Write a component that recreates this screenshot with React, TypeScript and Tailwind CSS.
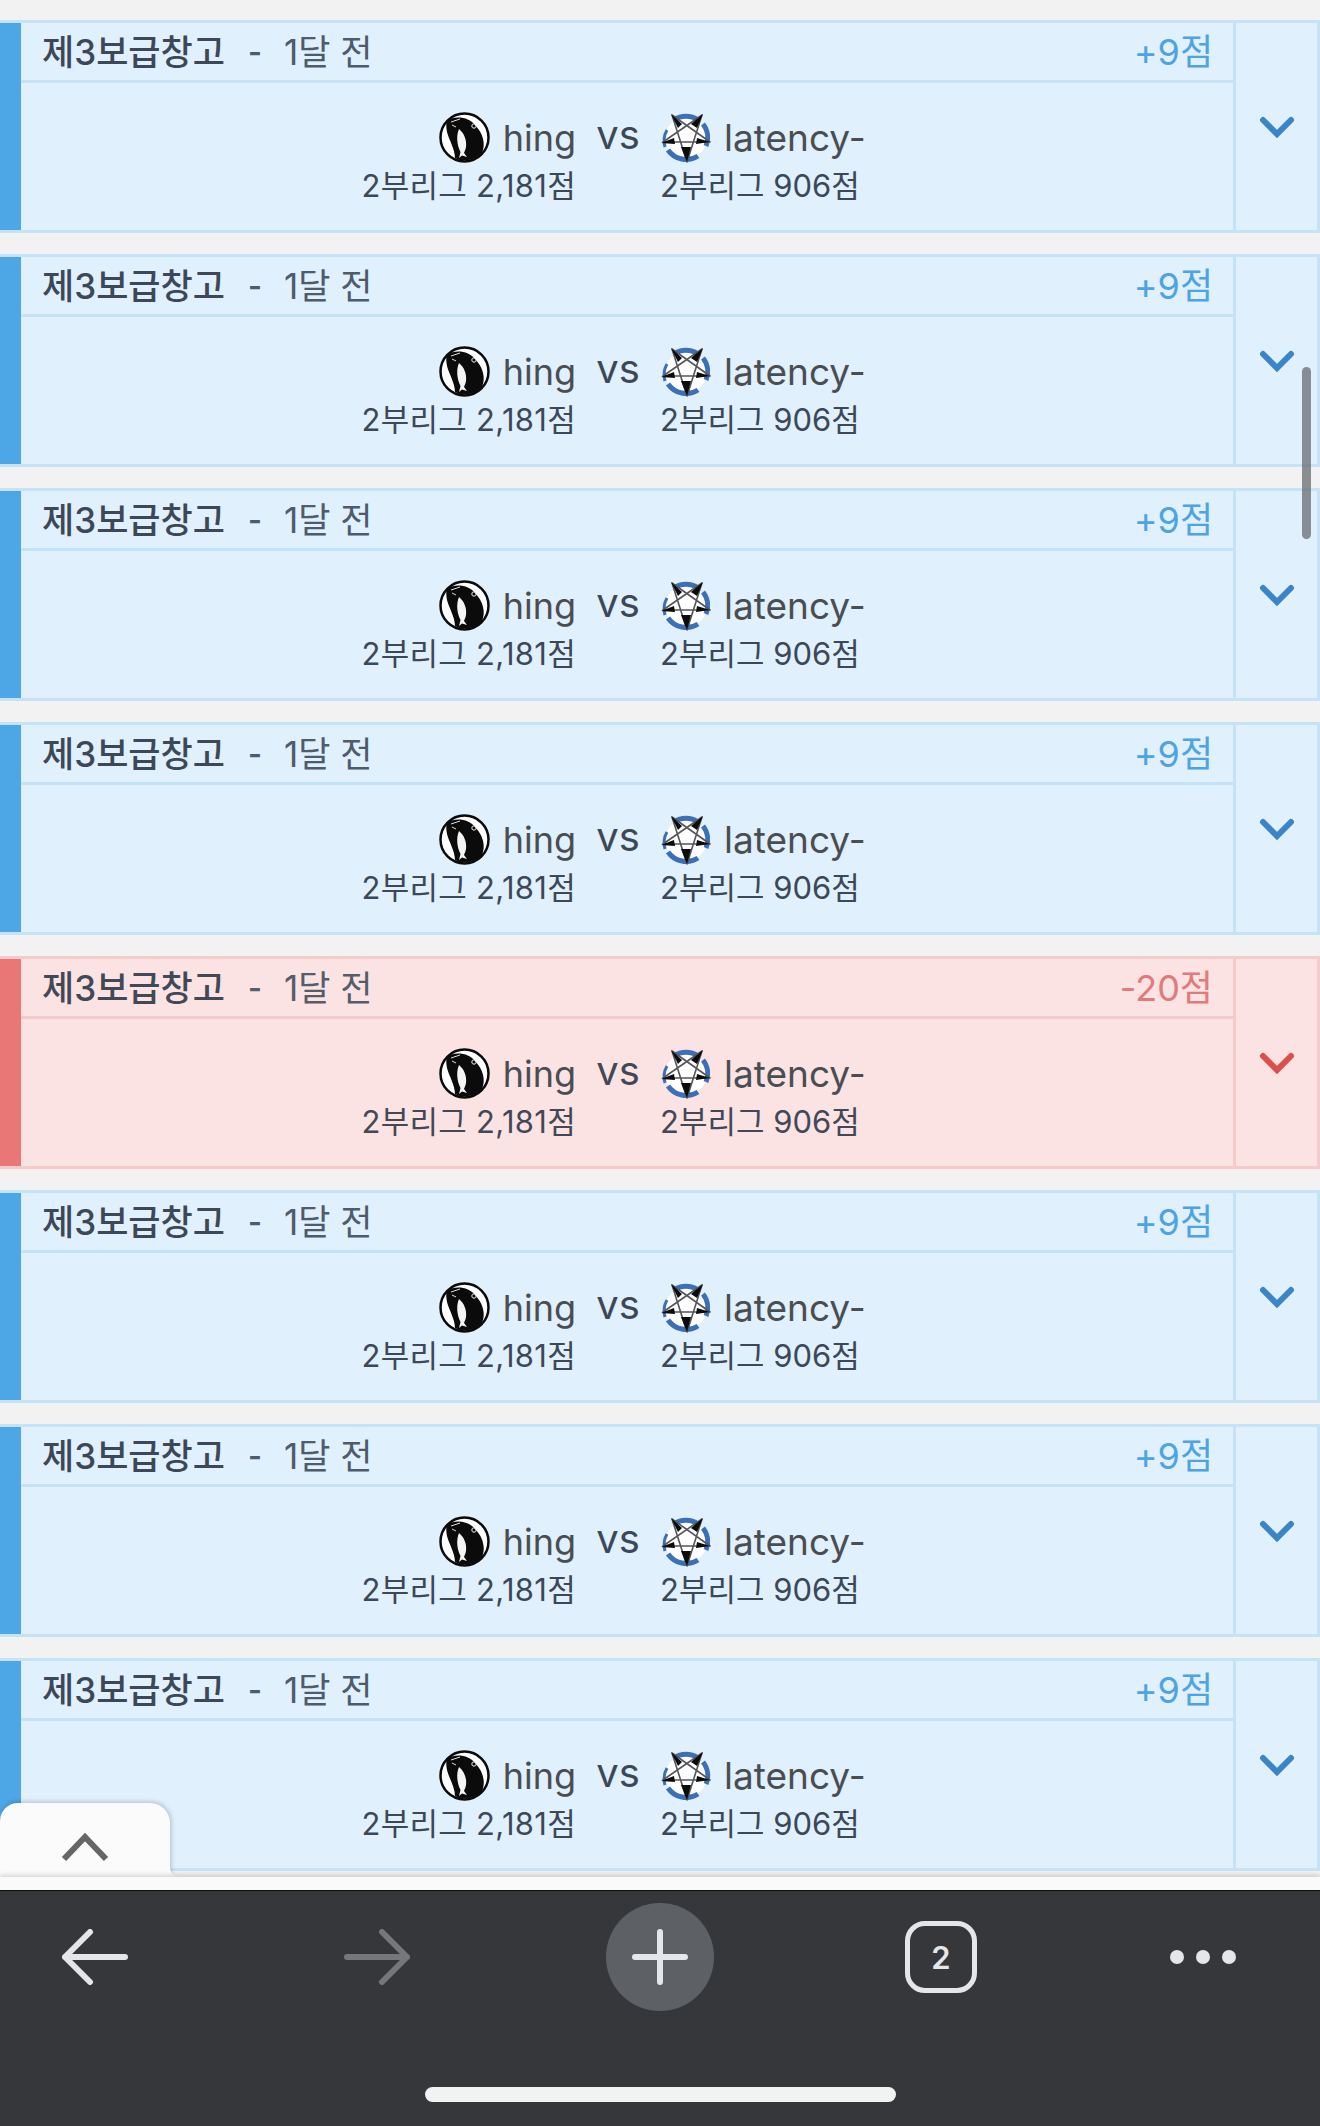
const FONT = "font-['Inter','Noto_Sans_CJK_KR',sans-serif]";

function FishAvatar() {
  return (
    <svg width="51" height="51" viewBox="0 0 51 51" className="shrink-0">
      <circle cx="25.5" cy="25.5" r="24" fill="#fff" stroke="#0a0a0a" strokeWidth="2.5" />
      <path d="M8 9 C16 3 30 5 36 13 C44 21 47 32 43 41 C37 48 24 51 16 46 C16 37 10 28 8 20 C7 15 7 12 8 9 Z" fill="#0b0b0b" />
      <path d="M20 17 C25 21 28 28 27 35 C26.5 38 25.5 39 25 41 L28 45 L23 43.5 L20 46 L21.5 40 C18 33 17 24 20 17 Z" fill="#f4f4f4" />
      <circle cx="35" cy="14" r="2.2" fill="none" stroke="#eee" strokeWidth="1" />
      <path d="M12 10 L21 7 M13 13 L17 15" stroke="#ddd" strokeWidth="1" />
    </svg>
  );
}

function StarAvatar() {
  return (
    <svg width="51" height="51" viewBox="0 0 51 51" className="shrink-0">
      <circle cx="26" cy="26" r="21" fill="#fff" />
      <path d="M14 8 A21 21 0 0 1 38 8" fill="none" stroke="#3b6fb8" strokeWidth="5" />
      <path d="M43 12 A22 22 0 0 1 46 34" fill="none" stroke="#3b6fb8" strokeWidth="5" />
      <path d="M38 44 A22 22 0 0 1 8 38" fill="none" stroke="#3b6fb8" strokeWidth="5" />
      <path d="M5 35 A22 22 0 0 1 7 18" fill="none" stroke="#3b6fb8" strokeWidth="3" />
      <path d="M12 3 L50 30 L3 30 L42 3 L27 50 Z" fill="none" stroke="#55565a" strokeWidth="1.6" strokeLinejoin="round" />
      <path d="M11 2 L22 12 L18 16 Z M43 2 L37 16 L31 12 Z M1 31 L14 26 L15 32 Z M50 30 L37 26 L36 32 Z M27 50 L21 35 L31 35 Z" fill="#0c0c0c" />
    </svg>
  );
}

function Card({ lose }: { lose?: boolean }) {
  const c = lose
    ? { bg: "bg-[#fbe3e3]", bd: "border-[#f5caca]", bar: "bg-[#e87775]", score: "text-[#e27a7a]", ch: "#dd4f4a", ink: "text-[#434857]", ink2: "text-[#575c6b]" }
    : { bg: "bg-[#e0f0fd]", bd: "border-[#c5e3f7]", bar: "bg-[#4da6e6]", score: "text-[#4ea4e3]", ch: "#3a85c8", ink: "text-[#3c4858]", ink2: "text-[#4e5b6d]" };
  return (
    <div className={`flex h-[213px] border-y-[3px] border-r-[3px] ${c.bg} ${c.bd}`}>
      <div className={`w-[21px] shrink-0 ${c.bar}`} />
      <div className="flex-1 min-w-0 flex flex-col">
        <div className={`h-[60px] shrink-0 border-b-[3px] ${c.bd} flex items-center justify-between pl-[21px] pr-[20px] pt-[1px] leading-none`}>
          <div className="flex items-center whitespace-nowrap text-[35px]">
            <span className={`font-medium ${c.ink}`}>제3보급창고</span>
            <span className={`ml-[23px] font-semibold text-[30px] ${c.ink2}`}>-</span>
            <span className={`ml-[22px] ${c.ink2}`}>1달 전</span>
          </div>
          <span className={`text-[36px] ${c.score}`}>{lose ? "-20점" : "+9점"}</span>
        </div>
        <div className="flex pt-[29px]">
          <div className="w-[555px] shrink-0 flex flex-col items-end">
            <div className="flex items-center h-[51px] gap-[13px]">
              <FishAvatar />
              <span className="text-[36px] leading-none text-[#4a4d52]">hing</span>
            </div>
            <span className={`mt-[6px] text-[31px] leading-[34px] whitespace-nowrap tracking-[0.3px] ${c.ink}`}>2부리그 2,181점</span>
          </div>
          <span className={`w-[84px] shrink-0 text-center text-[40px] leading-[45px] h-[51px] ${c.ink}`}>vs</span>
          <div className="flex flex-col items-start">
            <div className="flex items-center h-[51px] gap-[13px]">
              <StarAvatar />
              <span className="text-[37px] leading-none text-[#4a4d52] whitespace-nowrap">latency-</span>
            </div>
            <span className={`mt-[6px] text-[31px] leading-[34px] whitespace-nowrap ${c.ink}`}>2부리그 906점</span>
          </div>
        </div>
      </div>
      <div className={`w-[84px] shrink-0 border-l-[3px] ${c.bd} flex items-center justify-center pt-[2px]`}>
        <svg width="36" height="24" viewBox="0 0 36 24">
          <path d="M4 4 L18 18 L32 4" fill="none" stroke={c.ch} strokeWidth="6" strokeLinecap="round" strokeLinejoin="miter" />
        </svg>
      </div>
    </div>
  );
}

export default function App() {
  const rows = [false, false, false, false, true, false, false, false];
  return (
    <div className={`relative w-full h-screen overflow-hidden flex flex-col bg-[#f2f2f2] ${FONT}`}>
      <div className="relative h-[1877px] shrink-0 overflow-hidden">
        <div className="flex flex-col gap-[21px] pt-[20px]">
          {rows.map((l, i) => (
            <Card key={i} lose={l} />
          ))}
        </div>
        <div className="absolute left-0 bottom-0 w-[170px] h-[74px] bg-[#fbfbfb] rounded-tl-[18px] rounded-tr-[20px] shadow-[1px_-1px_5px_rgba(0,0,0,0.22)] flex justify-center pt-[29px]">
          <svg width="48" height="30" viewBox="0 0 48 30">
            <path d="M3 27 L24 5 L45 27" fill="none" stroke="#666" strokeWidth="6" />
          </svg>
        </div>
        <svg width="10" height="10" viewBox="0 0 10 10" className="absolute left-[170px] bottom-0">
          <path d="M0 0 C0 6 4 10 10 10 L0 10 Z" fill="#fbfbfb" />
        </svg>
        <div className="absolute right-[9px] top-[367px] w-[9px] h-[172px] rounded-full bg-[#5f6368]/70" />
      </div>
      <div className="relative h-[14px] shrink-0 bg-[#fafafa] shadow-[0_-2px_5px_rgba(0,0,0,0.16)] border-b border-[#111]" />
      <div className="flex-1 bg-[#36373a] flex flex-col items-center">
        <div className="w-full flex items-center h-[108px] mt-[12px]">
          <svg width="66" height="56" viewBox="0 0 66 56" className="ml-[62px]">
            <path d="M3 28 H63 M3 28 L28 3 M3 28 L28 53" fill="none" stroke="#e5e6ea" strokeWidth="6" strokeLinecap="round" />
          </svg>
          <svg width="66" height="56" viewBox="0 0 66 56" className="ml-[216px]">
            <path d="M3 28 H63 M63 28 L38 3 M63 28 L38 53" fill="none" stroke="#76777a" strokeWidth="6" strokeLinecap="round" />
          </svg>
          <div className="ml-[196px] w-[108px] h-[108px] rounded-full bg-[#5d6064] flex items-center justify-center">
            <svg width="56" height="56" viewBox="0 0 56 56">
              <path d="M3 28 H53 M28 3 V53" fill="none" stroke="#e5e6ea" strokeWidth="6" strokeLinecap="round" />
            </svg>
          </div>
          <div className="ml-[191px] w-[72px] h-[72px] rounded-[20px] border-[5px] border-[#e5e6ea] flex items-center justify-center text-[#e5e6ea] text-[31px] font-semibold leading-none">
            2
          </div>
          <div className="ml-[193px] flex gap-[12px]">
            <span className="w-[14px] h-[14px] rounded-full bg-[#e5e6ea]" />
            <span className="w-[14px] h-[14px] rounded-full bg-[#e5e6ea]" />
            <span className="w-[14px] h-[14px] rounded-full bg-[#e5e6ea]" />
          </div>
        </div>
        <div className="mt-[76px] w-[471px] h-[15px] rounded-full bg-[#f2f2f2]" />
      </div>
    </div>
  );
}
